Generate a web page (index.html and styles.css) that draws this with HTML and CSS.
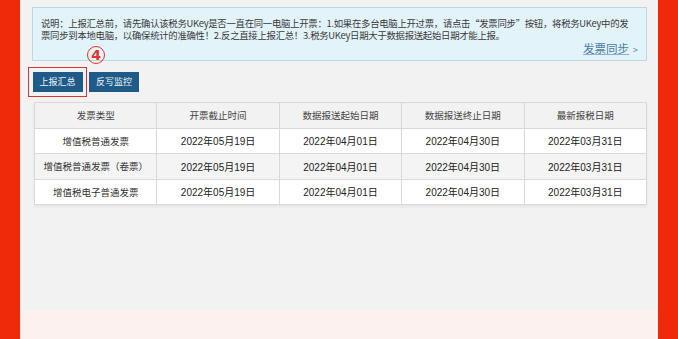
FILE: index.html
```html
<!DOCTYPE html>
<html lang="zh">
<head>
<meta charset="utf-8">
<link rel="stylesheet" href="styles.css">
</head>
<body>
<div class="frame">
  <div class="edge edge-left"></div>
  <main class="main">
    <section class="panel">
      <div class="notice">
        <p class="notice-text">说明：上报汇总前，请先确认该税务UKey是否一直在同一电脑上开票：1.如果在多台电脑上开过票，请点击“发票同步”按钮，将税务UKey中的发票同步到本地电脑，以确保统计的准确性！2.反之直接上报汇总！3.税务UKey日期大于数据报送起始日期才能上报。</p>
        <div class="notice-link"><a class="sync-link">发票同步</a><span class="sync-arrow">&gt;</span></div>
      </div>
      <div class="toolbar">
        <div class="highlight">
          <button class="btn">上报汇总</button>
          <span class="marker">4</span>
        </div>
        <button class="btn">反写监控</button>
      </div>
      <table class="grid">
        <thead>
          <tr><th>发票类型</th><th>开票截止时间</th><th>数据报送起始日期</th><th>数据报送终止日期</th><th>最新报税日期</th></tr>
        </thead>
        <tbody>
          <tr><td class="name">增值税普通发票</td><td>2022年05月19日</td><td>2022年04月01日</td><td>2022年04月30日</td><td>2022年03月31日</td></tr>
          <tr class="alt"><td class="name">增值税普通发票（卷票）</td><td>2022年05月19日</td><td>2022年04月01日</td><td>2022年04月30日</td><td>2022年03月31日</td></tr>
          <tr><td class="name">增值税电子普通发票</td><td>2022年05月19日</td><td>2022年04月01日</td><td>2022年04月30日</td><td>2022年03月31日</td></tr>
        </tbody>
      </table>
    </section>
    <div class="footer-band"></div>
  </main>
  <div class="edge edge-right"></div>
</div>
</body>
</html>
```

FILE: styles.css
```css
* { box-sizing: border-box; }
html, body { margin: 0; padding: 0; }
body {
  width: 678px;
  height: 339px;
  overflow: hidden;
  font-family: "Noto Sans CJK SC", "Liberation Sans", sans-serif;
  color: #333;
}
.frame {
  display: flex;
  height: 339px;
}
.edge {
  background: #ee2a0b;
  flex: 0 0 20px;
}
.edge-left { border-right: 1px solid #fbeae6; flex-basis: 21px; }
.edge-right { flex-basis: 20px; }
.main {
  flex: 1;
  display: flex;
  flex-direction: column;
  background: #f2f2f2;
}
.panel {
  flex: 0 0 310px;
  padding: 7px 11px 0 11px;
}
.footer-band {
  flex: 1;
  background: #fcf1ee;
}
.notice {
  background: #e3f3fa;
  border: 1px solid #bcd8e4;
  height: 54px;
  padding: 10px 8px 0 8px;
}
.notice-text {
  margin: 0 5px 0 0;
  font-size: 9.4px;
  letter-spacing: -0.28px;
  line-height: 11.5px;
  color: #3a3a3a;
}
.notice-link {
  display: flex;
  justify-content: flex-end;
  align-items: baseline;
  gap: 4px;
  margin-top: 0;
  padding-right: 0;
}
.sync-link {
  font-size: 11.5px;
  line-height: 14px;
  color: #4a7ca6;
  text-decoration: underline;
  text-decoration-color: #8fb0cb;
}
.sync-arrow {
  font-size: 9px;
  color: #4a7ca6;
}
.toolbar {
  display: flex;
  align-items: center;
  gap: 2px;
  margin-top: 6px;
  margin-left: -4px;
}
.highlight {
  position: relative;
  border: 1.5px solid #d7372e;
  padding: 4px 3.5px;
  display: flex;
}
.marker {
  position: absolute;
  left: 58px;
  top: -22px;
  width: 18px;
  height: 18px;
  border: 1.6px solid #e0352a;
  border-radius: 50%;
  display: flex;
  align-items: center;
  justify-content: center;
  font-family: "DejaVu Sans", sans-serif;
  font-size: 14px;
  font-weight: bold;
  line-height: 1;
  color: #e0352a;
}
.btn {
  width: 50px;
  height: 20px;
  border: 0;
  padding: 0;
  margin: 0;
  background: #1f5b88;
  color: #eef3f8;
  font-family: "Noto Sans CJK SC", sans-serif;
  font-size: 9px;
  line-height: 20px;
}
.grid {
  margin-top: 5px;
  margin-left: 2px;
  width: 613px;
  border-collapse: collapse;
  table-layout: fixed;
  background: #fff;
  box-shadow: 0 2px 3px rgba(0,0,0,0.06);
}
.grid th, .grid td {
  border: 1px solid #d9d9d9;
  text-align: center;
  height: 25.5px;
  padding: 0;
  font-weight: normal;
  font-size: 9.5px;
  color: #333;
}
.grid th {
  background: #f2f2f2;
  color: #444;
}
.grid td {
  font-family: "Liberation Sans", "Noto Sans CJK SC", sans-serif;
  font-size: 10px;
  color: #222;
}
.grid td.name { font-family: "Noto Sans CJK SC", sans-serif; font-size: 9.5px; color: #333; }
.grid tr.alt td { background: #f4f4f4; }
```
